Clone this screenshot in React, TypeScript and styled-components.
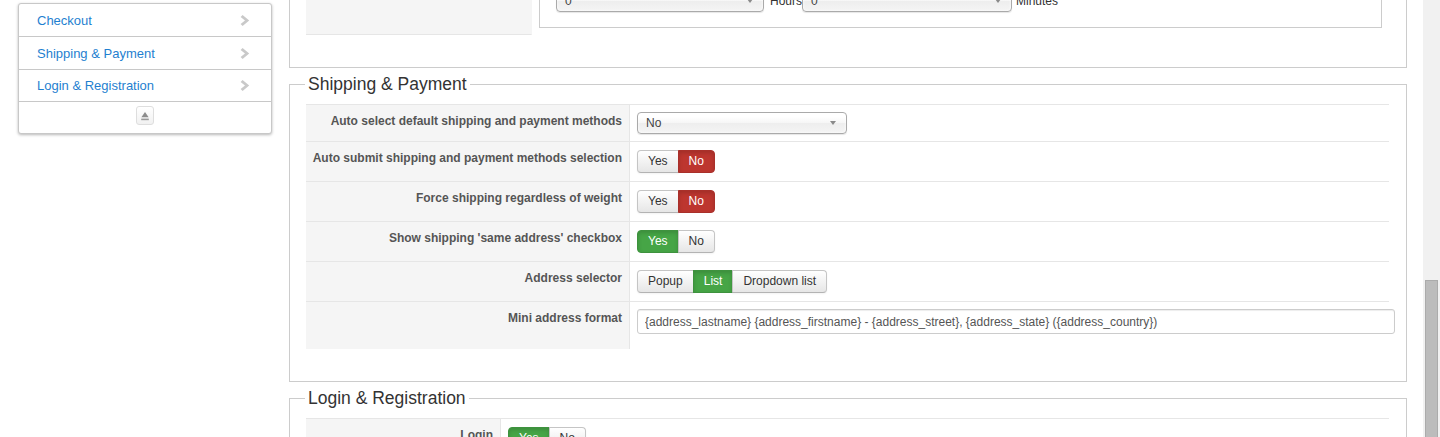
import React from 'react';
import styled, { createGlobalStyle, css } from 'styled-components';

const GlobalStyle = createGlobalStyle`
  html, body {
    margin: 0;
    padding: 0;
    background: #fff;
    font-family: "Liberation Sans", Arial, sans-serif;
    color: #333;
  }
  * {
    box-sizing: border-box;
  }
`;

const Page = styled.div`
  display: flex;
  align-items: flex-start;
  height: 100vh;
  overflow: hidden;
`;

const SideColumn = styled.div`
  width: 289px;
  flex-shrink: 0;
  padding: 3px 17px 0 18px;
`;

const SideNav = styled.nav`
  border: 1px solid #c8c8c8;
  border-radius: 3px;
  background: #fff;
  box-shadow: 0 1px 3px rgba(0, 0, 0, 0.28);
`;

const NavItem = styled.a`
  display: flex;
  align-items: center;
  justify-content: space-between;
  height: 33px;
  padding: 0 21px 0 18px;
  border-bottom: 1px solid #c8c8c8;
  font-size: 13px;
  color: #1f7fd0;
  text-decoration: none;
  &:nth-child(3) {
    height: 32px;
  }
`;

const CollapseRow = styled.div`
  display: flex;
  justify-content: center;
  height: 31px;
  padding-top: 4px;
`;

const CollapseButton = styled.span`
  display: flex;
  align-items: center;
  justify-content: center;
  width: 18px;
  height: 19px;
  border: 1px solid #dedede;
  border-radius: 3px;
  background: linear-gradient(#fff, #f1f1f1);
`;

const Main = styled.main`
  width: 1118px;
  flex-shrink: 0;
  margin-top: -30px;
`;

const TailFieldset = styled.div`
  border: 1px solid #ccc;
  border-top: none;
  padding: 0 17px 32px 16px;
`;

const Fieldset = styled.fieldset`
  margin: 6px 0 0;
  border: 1px solid #ccc;
  padding: 0 17px 32px 16px;
  min-width: 0;
`;

const Legend = styled.legend`
  margin-left: -1px;
  padding: 0 3px;
  font-size: 17.5px;
  line-height: 20px;
  color: #333;
`;

const FormTable = styled.div<{ $labelWidth: number; $spaced?: boolean }>`
  display: grid;
  grid-template-columns: ${(p) => p.$labelWidth}px minmax(0, 1fr);
  margin-top: ${(p) => (p.$spaced ? '10px' : '0')};
`;

const Label = styled.div<{ $closed?: boolean }>`
  background: #f5f5f5;
  border-top: 1px solid #e6e6e6;
  border-right: 1px solid #e6e6e6;
  padding: 7px 7px 6px 0;
  text-align: right;
  white-space: nowrap;
  font-size: 12px;
  font-weight: bold;
  line-height: 18px;
  color: #555;
  ${(p) =>
    p.$closed &&
    css`
      border-top: none;
      border-right-color: #f5f5f5;
      border-bottom: 1px solid #e6e6e6;
    `}
`;

const Value = styled.div<{ $open?: boolean }>`
  display: flex;
  align-items: flex-start;
  min-width: 0;
  border-top: ${(p) => (p.$open ? 'none' : '1px solid #e6e6e6')};
  padding: 7px;
`;

const Well = styled.div`
  flex: 1;
  border: 1px solid #ccc;
  border-top: none;
  padding: 9px 16px 15px;
`;

const TimeRow = styled.div`
  display: flex;
  align-items: center;
  margin-top: 4px;
  font-size: 12px;
  color: #333;
`;

const Unit = styled.span<{ $gap: number }>`
  margin-left: ${(p) => p.$gap}px;
`;

const Select = styled.div<{ $width: number }>`
  display: flex;
  align-items: center;
  justify-content: space-between;
  flex-shrink: 0;
  width: ${(p) => p.$width}px;
  height: 22px;
  padding: 0 10px 0 8px;
  border: 1px solid #aaa;
  border-radius: 4px;
  background: linear-gradient(#fff 20%, #f6f6f6 50%, #eee 52%, #f4f4f4 100%);
  box-shadow: inset 0 0 3px #fff, 0 1px 1px rgba(0, 0, 0, 0.1);
  font-size: 12px;
  color: #444;
`;

const Caret = styled.span`
  width: 0;
  height: 0;
  border-left: 3.5px solid transparent;
  border-right: 3.5px solid transparent;
  border-top: 4px solid #8a8a8a;
`;

const BtnGroup = styled.div`
  display: inline-flex;
  margin: 1px 0;
`;

type Tone = 'success' | 'danger';

const Btn = styled.button<{ $tone?: Tone }>`
  height: 23px;
  padding: 0 10px;
  margin: 0;
  border: 1px solid #c5c5c5;
  border-bottom-color: #b3b3b3;
  background: linear-gradient(#fff, #e6e6e6);
  box-shadow: inset 0 1px 0 rgba(255, 255, 255, 0.2), 0 1px 2px rgba(0, 0, 0, 0.05);
  font-family: "Liberation Sans", Arial, sans-serif;
  font-size: 12px;
  line-height: 21px;
  color: #333;
  border-radius: 0;
  & + & {
    margin-left: -1px;
  }
  &:first-child {
    border-radius: 4px 0 0 4px;
  }
  &:last-child {
    border-radius: 0 4px 4px 0;
  }
  ${(p) =>
    p.$tone === 'danger' &&
    css`
      background: #bd362f;
      border-color: #a9302a;
      color: #fff;
      box-shadow: inset 0 2px 4px rgba(0, 0, 0, 0.15);
    `}
  ${(p) =>
    p.$tone === 'success' &&
    css`
      background: #46a546;
      border-color: #3e923e;
      color: #fff;
      box-shadow: inset 0 2px 4px rgba(0, 0, 0, 0.15);
    `}
`;

const TextInput = styled.input`
  flex-shrink: 0;
  width: 758px;
  height: 25px;
  margin: 0 0 8px;
  padding: 0 7px;
  border: 1px solid #ccc;
  border-radius: 3px;
  box-shadow: inset 0 1px 1px rgba(0, 0, 0, 0.075);
  font-family: "Liberation Sans", Arial, sans-serif;
  font-size: 12px;
  color: #555;
`;

const Scrollbar = styled.div`
  align-self: stretch;
  width: 17px;
  flex-shrink: 0;
  margin-left: auto;
  padding: 280px 2px 0;
  background: #f1f1f1;
`;

const Thumb = styled.div`
  height: 100%;
  background: #bcbcbc;
  border: 1px solid #ababab;
  border-bottom: none;
`;

const Chevron = () => (
  <svg width="10" height="11" viewBox="0 0 10 11">
    <path d="M2.6 0 L9.2 5.5 L2.6 11 L0.6 9 L5 5.5 L0.6 2 Z" fill="#c9c9c9" />
  </svg>
);

const CollapseIcon = () => (
  <svg width="10" height="10" viewBox="0 0 10 10">
    <path d="M5 1 L8.6 6.3 L1.4 6.3 Z" fill="#8c8c8c" />
    <rect x="1.2" y="7.6" width="7.6" height="1.6" fill="#9a9a9a" />
  </svg>
);

type Choice = { label: string; tone?: Tone };

const Toggle = ({ options }: { options: Choice[] }) => (
  <BtnGroup>
    {options.map((o) => (
      <Btn key={o.label} type="button" $tone={o.tone}>
        {o.label}
      </Btn>
    ))}
  </BtnGroup>
);

const yesNo = (active: 'yes' | 'no'): Choice[] =>
  active === 'yes'
    ? [{ label: 'Yes', tone: 'success' }, { label: 'No' }]
    : [{ label: 'Yes' }, { label: 'No', tone: 'danger' }];

const navItems = ['Checkout', 'Shipping & Payment', 'Login & Registration'];

export default function App() {
  return (
    <>
      <GlobalStyle />
      <Page>
        <SideColumn>
          <SideNav>
            {navItems.map((item) => (
              <NavItem key={item} href="#">
                {item}
                <Chevron />
              </NavItem>
            ))}
            <CollapseRow>
              <CollapseButton>
                <CollapseIcon />
              </CollapseButton>
            </CollapseRow>
          </SideNav>
        </SideColumn>

        <Main>
          <TailFieldset>
            <FormTable $labelWidth={226}>
              <Label $closed />
              <Value $open>
                <Well>
                  <TimeRow>
                    <Select $width={208}>
                      0<Caret />
                    </Select>
                    <Unit $gap={6}>Hours</Unit>
                    <Select $width={210}>
                      0<Caret />
                    </Select>
                    <Unit $gap={4}>Minutes</Unit>
                  </TimeRow>
                </Well>
              </Value>
            </FormTable>
          </TailFieldset>

          <Fieldset>
            <Legend>Shipping &amp; Payment</Legend>
            <FormTable $labelWidth={324} $spaced>
              <Label>Auto select default shipping and payment methods</Label>
              <Value>
                <Select $width={210}>
                  No<Caret />
                </Select>
              </Value>

              <Label>Auto submit shipping and payment methods selection</Label>
              <Value>
                <Toggle options={yesNo('no')} />
              </Value>

              <Label>Force shipping regardless of weight</Label>
              <Value>
                <Toggle options={yesNo('no')} />
              </Value>

              <Label>Show shipping 'same address' checkbox</Label>
              <Value>
                <Toggle options={yesNo('yes')} />
              </Value>

              <Label>Address selector</Label>
              <Value>
                <Toggle
                  options={[
                    { label: 'Popup' },
                    { label: 'List', tone: 'success' },
                    { label: 'Dropdown list' },
                  ]}
                />
              </Value>

              <Label>Mini address format</Label>
              <Value>
                <TextInput
                  readOnly
                  value="{address_lastname} {address_firstname} - {address_street}, {address_state} ({address_country})"
                />
              </Value>
            </FormTable>
          </Fieldset>

          <Fieldset>
            <Legend>Login &amp; Registration</Legend>
            <FormTable $labelWidth={195} $spaced>
              <Label>Login</Label>
              <Value>
                <Toggle options={yesNo('yes')} />
              </Value>
            </FormTable>
          </Fieldset>
        </Main>

        <Scrollbar>
          <Thumb />
        </Scrollbar>
      </Page>
    </>
  );
}
